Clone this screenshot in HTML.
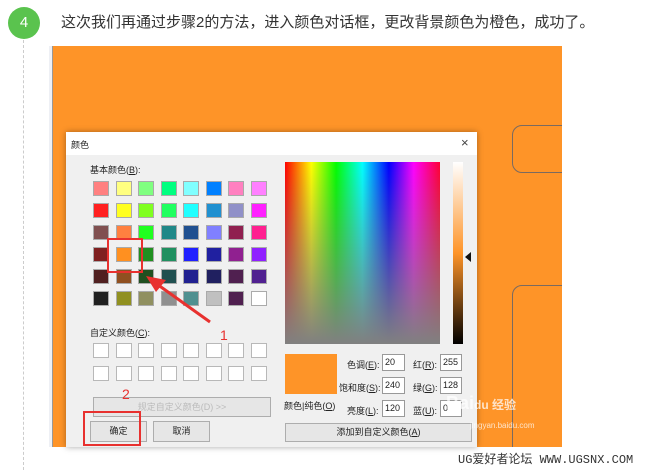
<!DOCTYPE html>
<html><head><meta charset="utf-8"><style>
*{margin:0;padding:0;box-sizing:border-box}
body{width:669px;height:470px;background:#fff;position:relative;overflow:hidden;font-family:"Liberation Sans","Noto Sans CJK SC",sans-serif}
.a{position:absolute}
.t{font-size:9px;color:#222;white-space:nowrap}
.sw{position:absolute;width:16px;height:15px;border:1px solid #aaa}
.cb{position:absolute;width:16px;height:15px;background:#fff;border:1px solid #b8b8b8}
.fld{position:absolute;background:#fff;border:1px solid #999;font-size:9px;padding:2px 0 0 2px;color:#222}
.btn{position:absolute;background:#e6e6e6;border:1px solid #adadad;font-size:9px;text-align:center;color:#222}
#img{position:absolute;left:49px;top:46px;width:513px;height:401px;background:#fe9428;overflow:hidden}
</style></head><body>
<div class="a" style="left:8px;top:7px;width:32px;height:32px;border-radius:50%;background:#5ac34e;color:#fff;font-size:15px;text-align:center;line-height:32px">4</div>
<div class="a" style="left:23px;top:40px;height:430px;border-left:1px dashed #ccc"></div>
<div class="a" style="left:61px;top:11px;font-size:15px;color:#333">这次我们再通过步骤2的方法，进入颜色对话框，更改背景颜色为橙色，成功了。</div>
<div id="img">
<div class="a" style="left:0;top:0;width:4px;height:401px;background:#eef0f5;border-right:1px solid #999"></div>
<div class="a" style="left:463px;top:79px;width:80px;height:48px;border:1px solid #7a6a60;border-radius:10px"></div>
<div class="a" style="left:463px;top:239px;width:80px;height:200px;border:1px solid #7a6a60;border-radius:10px"></div>
</div>
<!-- dialog -->
<div class="a" style="left:66px;top:132px;width:411px;height:315px;background:#f0f0f0;box-shadow:0 0 6px rgba(0,0,0,.35)"></div>
<div class="a" style="left:66px;top:132px;width:411px;height:23px;background:#fff"></div>
<div class="a t" style="left:71px;top:138px">颜色</div>
<div class="a" style="left:461px;top:135px;font-size:13px;color:#444">×</div>
<div class="a t" style="left:90px;top:163px">基本颜色(<u>B</u>):</div>
<div id="g"></div>
<div class="a t" style="left:90px;top:326px">自定义颜色(<u>C</u>):</div>
<div id="c"></div>
<div class="btn" style="left:93px;top:397px;width:178px;height:20px;line-height:18px;color:#bbb">规定自定义颜色(D) &gt;&gt;</div>
<div class="btn" style="left:90px;top:421px;width:57px;height:21px;line-height:19px">确定</div>
<div class="btn" style="left:153px;top:421px;width:57px;height:21px;line-height:19px">取消</div>
<div class="a" style="left:83px;top:411px;width:58px;height:35px;border:2px solid #e8312f"></div>
<div class="a" style="left:122px;top:386px;color:#e8312f;font-size:14px">2</div>
<div class="a" style="left:220px;top:327px;color:#e8312f;font-size:14px">1</div>
<div class="a" style="left:107px;top:238px;width:36px;height:35px;border:2px solid #e8312f"></div>
<svg class="a" style="left:140px;top:268px" width="80" height="60"><line x1="70" y1="54" x2="14" y2="14" stroke="#e8312f" stroke-width="3"/><polygon points="6,8 26,12 16,24" fill="#e8312f"/></svg>
<!-- spectrum -->
<div class="a" style="left:285px;top:162px;width:155px;height:182px;background:linear-gradient(to bottom,rgba(128,128,128,0),rgba(128,128,128,1)),linear-gradient(to right,#f00,#ff0 17%,#0f0 33%,#0ff 50%,#00f 67%,#f0f 83%,#f03)"></div>
<div class="a" style="left:453px;top:162px;width:10px;height:182px;background:linear-gradient(#fff,#fe9428 50%,#000)"></div>
<div class="a" style="left:465px;top:252px;width:0;height:0;border-top:5px solid transparent;border-bottom:5px solid transparent;border-right:6px solid #111"></div>
<div class="a" style="left:285px;top:354px;width:52px;height:40px;background:#fe9428"></div>
<div class="a t" style="left:284px;top:399px">颜色|纯色(<u>O</u>)</div>
<div class="a t" style="left:347px;top:358px">色调(<u>E</u>):</div>
<div class="a t" style="left:339px;top:381px">饱和度(<u>S</u>):</div>
<div class="a t" style="left:347px;top:404px">亮度(<u>L</u>):</div>
<div class="fld" style="left:382px;top:354px;width:23px;height:17px">20</div>
<div class="fld" style="left:382px;top:377px;width:23px;height:17px">240</div>
<div class="fld" style="left:382px;top:400px;width:23px;height:17px">120</div>
<div class="a t" style="left:413px;top:358px">红(<u>R</u>):</div>
<div class="a t" style="left:413px;top:381px">绿(<u>G</u>):</div>
<div class="a t" style="left:413px;top:404px">蓝(<u>U</u>):</div>
<div class="fld" style="left:440px;top:354px;width:22px;height:17px">255</div>
<div class="fld" style="left:440px;top:377px;width:22px;height:17px">128</div>
<div class="fld" style="left:440px;top:400px;width:22px;height:17px">0</div>
<div class="btn" style="left:285px;top:423px;width:187px;height:19px;line-height:17px">添加到自定义颜色(<u>A</u>)</div>
<div class="a" style="left:446px;top:393px;color:rgba(255,255,255,.75);font-size:18px;font-weight:bold">Bai<span style="font-size:12px">du 经验</span></div>
<div class="a" style="left:470px;top:421px;color:rgba(255,255,255,.75);font-size:8px">jingyan.baidu.com</div>
<div class="a" style="left:458px;top:450px;font-size:12px;color:#333;font-family:'Liberation Mono','Noto Sans CJK SC',monospace">UG爱好者论坛 WWW.UGSNX.COM</div>
<script>
var cols=[["#ff8080","#ffff80","#80ff80","#00ff80","#80ffff","#0080ff","#ff80c0","#ff80ff"],
["#ff2020","#ffff20","#80ff20","#20ff60","#20ffff","#2090d0","#9090c8","#ff20ff"],
["#805050","#ff8040","#20ff20","#208888","#205090","#8080ff","#902050","#ff2090"],
["#802020","#ff9020","#209020","#209060","#2020ff","#2020a0","#902090","#9020ff"],
["#502020","#905020","#205020","#205050","#202090","#202060","#502050","#502090"],
["#202020","#909020","#909060","#909090","#509090","#c0c0c0","#502050","#ffffff"]];
var h="";
for(var r=0;r<6;r++)for(var c=0;c<8;c++)h+='<div class="sw" style="left:'+(93+c*22.5)+'px;top:'+(181+r*22)+'px;background:'+cols[r][c]+'"></div>';
document.getElementById("g").innerHTML=h;
h="";
for(var r=0;r<2;r++)for(var c=0;c<8;c++)h+='<div class="cb" style="left:'+(93+c*22.5)+'px;top:'+(343+r*23)+'px"></div>';
document.getElementById("c").innerHTML=h;
</script>
</body></html>
